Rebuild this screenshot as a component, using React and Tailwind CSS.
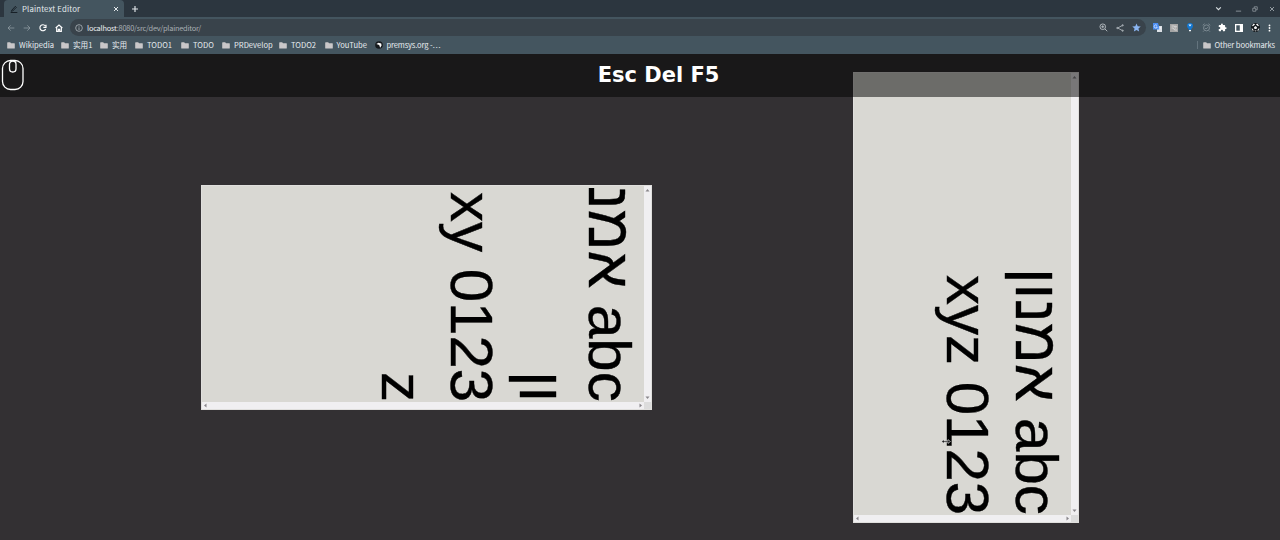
import React from "react";

function Icon({ children, className = "", box = "0 0 24 24", w = 2.4 }) {
  return (
    <svg viewBox={box} fill="none" stroke="currentColor" strokeWidth={w} className={`block shrink-0 ${className}`}>
      {children}
    </svg>
  );
}

function Folder() {
  return (
    <svg viewBox="0 0 8 7" className="block h-[7px] w-2 shrink-0 fill-[#c9c7c9]">
      <path d="M.7.3h2.5l.8.9h3.3q.5 0 .5.6v4.1q0 .7-.6.7H.8q-.6 0-.6-.7V.9Q.2.3.7.3z" />
    </svg>
  );
}

const bookmarks = [
  ["Wikipedia", "w-[54px]"],
  ["实用1", "w-[39px]"],
  ["实用", "w-[35px]"],
  ["TODO1", "w-[46px]"],
  ["TODO", "w-[41px]"],
  ["PRDevelop", "w-[57px]"],
  ["TODO2", "w-[45.5px]"],
  ["YouTube", "w-[50px]"],
];

function TabStrip() {
  return (
    <div className="flex h-[17px] items-end bg-[#2c363f]">
      <div className="ml-1 flex h-[17px] w-[120px] items-center rounded-t-[4px] bg-[#44555f] pl-[6px] pr-[5px]">
        <Icon className="size-2 text-[#172027]" w={3}>
          <path d="M5 16 16 4l3 3L8 18l-4 1zM2 22.5h20" />
        </Icon>
        <span className="ml-1 grow text-[7.8px] tracking-[0.14px] text-[#e2e9ed]">Plaintext Editor</span>
        <Icon className="size-[6px] text-[#e4e9ec]" w={4}>
          <path d="m4 4 16 16M20 4 4 20" />
        </Icon>
      </div>
      <div className="flex h-[17px] grow items-center">
        <Icon className="ml-[7px] size-2 text-[#dfe4e7]" w={3.5}>
          <path d="M12 3v18M3 12h18" />
        </Icon>
        <div className="ml-auto mr-[5px] flex items-center text-[#929aa0]">
          <Icon className="mr-[13px] size-[7px] text-[#d8dee1]" w={4}>
            <path d="m4 8 8 8 8-8" />
          </Icon>
          <Icon className="mr-[10px] size-[7px]" w={3}>
            <path d="M3 21h18" />
          </Icon>
          <Icon className="mr-[11px] size-[6px]" w={3}>
            <path d="M3 9h12v12H3zM9 9V3h12v12h-6" />
          </Icon>
          <Icon className="size-[6px]" w={4}>
            <path d="m4 4 16 16M20 4 4 20" />
          </Icon>
        </div>
      </div>
    </div>
  );
}

function Toolbar() {
  return (
    <div className="flex h-[21px] items-center bg-[#44555f]">
      <div className="flex w-[70px] items-center pl-[7px] text-[#8e9aa1]">
        <Icon className="mr-2 size-2">
          <path d="M22 12H3m8-8-8 8 8 8" />
        </Icon>
        <Icon className="mr-2 size-2">
          <path d="M2 12h19m-8-8 8 8-8 8" />
        </Icon>
        <Icon className="mr-2 size-2 text-white" w={3.4}>
          <path d="M20 15a9 9 0 1 1-1-9M21 2v8h-8" />
        </Icon>
        <Icon className="size-2 text-white" w={3.4}>
          <path d="M2 12 12 3l10 9M5 10v12h5v-6h4v6h5V10" />
        </Icon>
      </div>
      <div className="flex h-[17px] w-[1076px] items-center rounded-full bg-[#39434b] pl-[5px] pr-[5px]">
        <Icon className="size-2 text-[#b0b7bc]">
          <circle cx="12" cy="12" r="10" />
          <path d="M12 10v8M12 6v2" />
        </Icon>
        <span className="ml-1 grow whitespace-pre text-[7.4px] tracking-[-0.22px] text-[#a9b0b5]">
          <span className="text-[#edf0f2]">localhost</span>:8080/src/dev/plaineditor/
        </span>
        <Icon className="mr-2 size-[9px] text-[#b9bfc4]">
          <circle cx="10" cy="10" r="7.5" />
          <path d="m16 16 6 6M6 10h8M10 6v8" />
        </Icon>
        <Icon className="mr-2 size-2 text-[#b9bfc4]">
          <path d="m20 4-15 8 15 8" />
          <circle cx="20" cy="4" r="2" />
          <circle cx="4" cy="12" r="2" />
          <circle cx="20" cy="20" r="2" />
        </Icon>
        <svg viewBox="0 0 24 24" className="size-[9px] shrink-0 fill-[#8ab4f0]">
          <path d="m12 1 3.2 7.5 8.1.7-6.1 5.4 1.8 8L12 18.4l-7 4.2 1.8-8L.7 9.2l8.1-.7z" />
        </svg>
      </div>
      <div className="ml-[6px] flex grow items-center justify-between pl-px pr-[9px]">
        <svg viewBox="0 0 9 9" className="size-[9px]">
          <path fill="#dbe0e5" d="M4 3h5v6H4z" />
          <path fill="#4b8df0" d="M0 0h5l2 6.5H0z" />
          <path d="M4 2.5a1.6 1.6 0 1 0 .3 1.5H3M5.7 5h2.6M7 4.2c0 2-1 3-1.3 3.2" fill="none" stroke="#fff" strokeWidth=".6" />
        </svg>
        <svg viewBox="0 0 8 8" className="size-2">
          <path fill="#a5a5a5" d="M0 0h8v8H0z" />
          <path d="M1.5 2h3l1 2.5M1.5 4h2l1 2H7M5 2l2 1" fill="none" stroke="#e9e9e9" strokeWidth=".7" />
        </svg>
        <svg viewBox="0 0 8 9" className="h-[9px] w-2">
          <path fill="#1278d4" d="M4 0a3 3 0 0 1 3 3c0 2-2 2.500-2 4H3C3 5.500 1 5 1 3a3 3 0 0 1 3-3z" />
          <path fill="#f2f7fb" d="M2.4 1.500h3.200L4 3.400zM3 7h2v1.300H3z" />
        </svg>
        <Icon className="size-[9px] text-[#7d8b93]" w={2.6}>
          <circle cx="12" cy="13" r="8" />
          <path d="M2 6l5-4M22 6l-5-4M8 13l3 3 5-5M6 20l-3 3M18 20l3 3" />
        </Icon>
        <svg viewBox="0 0 24 24" className="size-[9px] fill-white">
          <path d="M20.500 11H19V7a2 2 0 0 0-2-2h-4V3.500a2.500 2.500 0 0 0-5 0V5H4a2 2 0 0 0-2 2v3.800h1.500a2.700 2.700 0 0 1 0 5.400H2V20a2 2 0 0 0 2 2h3.800v-1.500a2.700 2.700 0 0 1 5.400 0V22H17a2 2 0 0 0 2-2v-4h1.500a2.500 2.500 0 0 0 0-5z" />
        </svg>
        <svg viewBox="0 0 8 8" className="size-2">
          <path fill="#fff" d="M0 0h8v8H0z" />
          <path fill="#44555f" d="M1.300 1.300h3.500v5.400H1.300z" />
        </svg>
        <svg viewBox="0 0 10 10" className="size-[9px]">
          <circle cx="5" cy="5" r="5" fill="#14191d" />
          <path fill="#f4f4f4" d="m5 3.400 1.700 1.200-.6 2H3.900l-.6-2zM2.500.8 4.600 1 3 3.100 1 3.600zM7.500.8 5.400 1 7 3.100l2 .5zM.6 6l1.500.4.8 2.200-1 .1zM9.400 6l-1.500.4-.8 2.200 1 .1zM3.800 8.300h2.400L5 9.500z" />
        </svg>
        <svg viewBox="0 0 4 10" className="h-2 w-[3px] fill-white">
          <circle cx="2" cy="1.500" r="1.200" />
          <circle cx="2" cy="5" r="1.200" />
          <circle cx="2" cy="8.500" r="1.200" />
        </svg>
      </div>
    </div>
  );
}

function BookmarksBar() {
  return (
    <div className="flex h-4 items-center bg-[#44555f] pb-[2px] pl-[7px] text-[7.6px] text-[#e7ecef]">
      {bookmarks.map(([name, width]) => (
        <div key={name} className={`flex shrink-0 items-center whitespace-nowrap ${width}`}>
          <Folder />
          <span className="ml-1">{name}</span>
        </div>
      ))}
      <svg viewBox="0 0 9 9" className="size-2 shrink-0">
        <circle cx="4.500" cy="4.500" r="4.300" fill="#15191d" />
        <path fill="#fff" d="M1.500 3.400 4 2l3 .9.400 2.100L5.800 7.500 4.700 4.500z" />
      </svg>
      <span className="ml-1 whitespace-nowrap tracking-[-0.16px]">premsys.org -…</span>
      <div className="ml-auto flex items-center pr-[5px]">
        <div className="mr-[5px] h-2 w-px bg-[#64747e]" />
        <Folder />
        <span className="ml-[3.5px] whitespace-nowrap tracking-[-0.1px]">Other bookmarks</span>
      </div>
    </div>
  );
}

function Arrow({ dir }) {
  const paths = {
    up: "M.5 3.500h4L2.500 1z",
    down: "M.5 1.500h4L2.500 4z",
    left: "M3.500.5v4L1 2.500z",
    right: "M1.500.5v4L4 2.500z",
  };
  return (
    <svg viewBox="0 0 5 5" className="size-[5px] shrink-0 fill-[#88868a]">
      <path d={paths[dir]} />
    </svg>
  );
}

function Editor({ lines, size, children }) {
  return (
    <section className={`grid shrink-0 grid-cols-[1fr_7px] grid-rows-[1fr_7px] border border-[#e0dfdd] bg-[#f0eff1] ${size}`}>
      <div className="relative flex min-h-0 min-w-0 justify-end overflow-hidden bg-[#d9d8d3]">
        <div className="h-full whitespace-pre text-end font-['Liberation_Sans',sans-serif] text-[60px] leading-[69px] text-black [-webkit-text-stroke:0.4px_black] [writing-mode:vertical-rl]">
          {lines.map((line) => (
            <div key={line}>{line}</div>
          ))}
        </div>
        {children}
      </div>
      <div className="flex flex-col items-center justify-between py-[2px]">
        <Arrow dir="up" />
        <Arrow dir="down" />
      </div>
      <div className="flex items-center justify-between px-px">
        <Arrow dir="left" />
        <Arrow dir="right" />
      </div>
      <div className="bg-[#dcdcdc]" />
    </section>
  );
}

export default function App() {
  return (
    <div className="flex h-[540px] w-[1280px] flex-col overflow-hidden bg-[#333033] leading-none [font-family:'Noto_Sans_CJK_SC',sans-serif]">
      <TabStrip />
      <Toolbar />
      <BookmarksBar />
      <main className="relative flex grow items-center bg-[#333033] pl-[201px] pt-px">
        <Editor size="h-[225px] w-[451px]" lines={["אמנ abc", "ון", "xy 0123", "z"]} />
        <div className="w-[201px] shrink-0" />
        <Editor size="h-[451px] w-[226px]" lines={["אמנון abc", "xyz 0123"]}>
          <svg viewBox="0 0 10 5" className="absolute left-[87px] top-[366px] h-[5px] w-[10px]">
            <path d="M.5 2.500 3 .5v1.300h4V.5l2.500 2-2.500 2V3.200H3v1.300z" fill="#222" stroke="#fff" strokeWidth=".5" />
          </svg>
        </Editor>
        <header className="absolute inset-x-0 top-0 flex h-[43px] items-center justify-center bg-black/50">
          <svg viewBox="0 0 24 32" className="absolute left-[1px] top-[5px] h-8 w-6 fill-none stroke-white" strokeWidth="1.300">
            <rect x="1.500" y="1.500" width="20.500" height="29" rx="8" />
            <rect x="8.500" y="2" width="6.500" height="11" rx="3.200" />
          </svg>
          <h1 className="ml-[37px] font-['DejaVu_Sans',sans-serif] text-[21px] font-bold text-white">Esc Del F5</h1>
        </header>
      </main>
    </div>
  );
}
